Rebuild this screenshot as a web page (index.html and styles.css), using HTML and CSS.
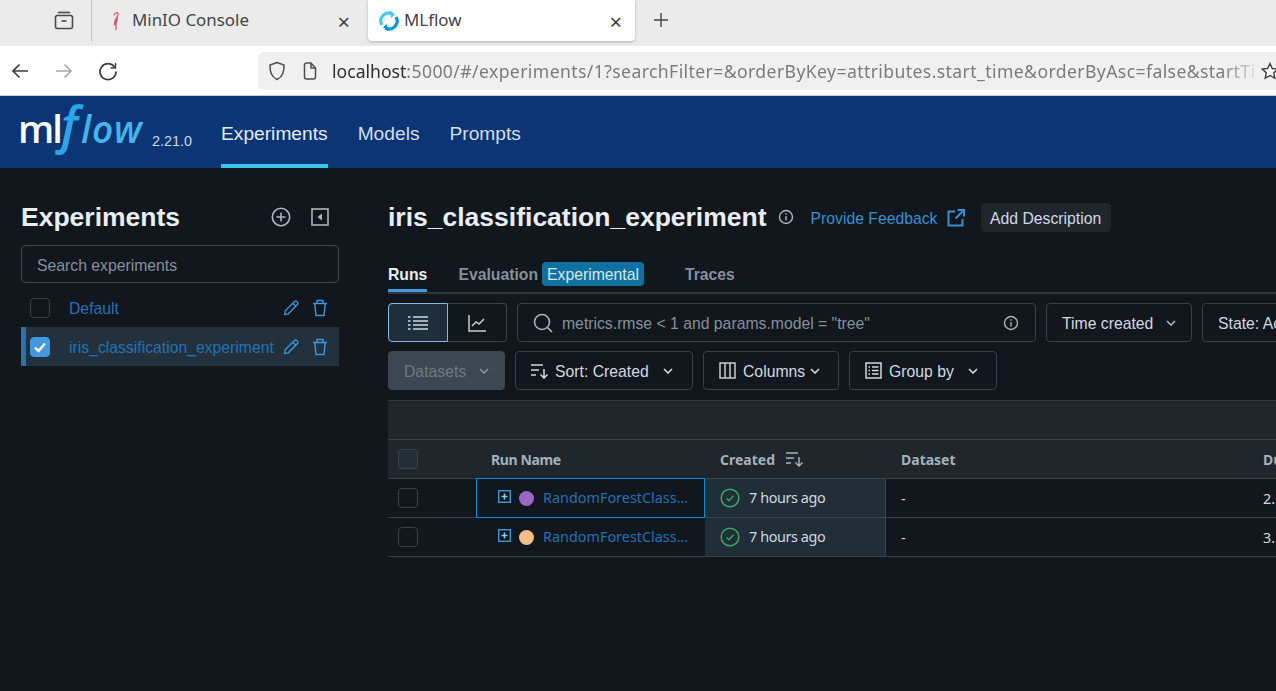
FILE: index.html
```html
<!DOCTYPE html>
<html lang="en">
<head>
  <meta charset="UTF-8">
  <title>MLflow</title>
  <link rel="stylesheet" href="styles.css">
</head>
<body>
  <div class="tabstrip">
    <svg class="tablist" width="20" height="20" viewBox="0 0 20 20" fill="none" stroke="#4a4a4a" stroke-width="1.6"><path d="M4 2.5h12"/><rect x="1.5" y="5.500" width="17" height="13" rx="2"/><path d="M7.500 11h5"/></svg>
    <div class="tab">
      <svg width="14" height="20" viewBox="0 0 14 20" fill="none" stroke="#d9556b" stroke-width="1.300"><path d="M5 4.500C5 2 8 1 9 2.500c.6 1-.2 2.500-1 4L7.500 9"/><path d="M7.800 6.500c.8 2.500.4 4.500-2.300 7 0-3 .4-5 2.300-7z" fill="#d9556b"/><path d="M7 11.500V19"/></svg>
      <span class="tab-title">MinIO Console</span>
      <span class="tab-close">×</span>
    </div>
    <div class="tab tab-active">
      <svg width="20" height="20" viewBox="0 0 20 20" fill="none" stroke-width="3.2"><path d="M3 14A8 8 0 0 1 13.500 2.800" stroke="#43c9ed"/><path d="M17 6a8 8 0 0 1-10.500 11.200" stroke="#0194e2"/><path d="M11 .5l5 3-4 3.500z" fill="#43c9ed" stroke="none"/><path d="M9 19.500l-5-3 4-3.500z" fill="#0194e2" stroke="none"/></svg>
      <span class="tab-title">MLflow</span>
      <span class="tab-close">×</span>
    </div>
    <svg class="newtab" width="16" height="16" viewBox="0 0 16 16" stroke="#444" stroke-width="1.4"><path d="M8 1v14M1 8h14"/></svg>
  </div>

  <div class="toolbar">
    <svg class="nav-btn" width="20" height="20" viewBox="0 0 20 20" fill="none" stroke="#3d3d3d" stroke-width="1.7"><path d="M18 10H3M9.500 3.500 3 10l6.500 6.500"/></svg>
    <svg class="nav-btn" width="20" height="20" viewBox="0 0 20 20" fill="none" stroke="#a8a8a8" stroke-width="1.6"><path d="M2 10h15M10.500 3.500 17 10l-6.500 6.500"/></svg>
    <svg class="nav-btn" width="20" height="20" viewBox="0 0 20 20" fill="none" stroke="#3d3d3d" stroke-width="1.7"><path d="M16.500 6A8 8 0 1 0 18 10.500"/><path d="M17.500 2v5h-5" stroke-width="1.500"/></svg>
    <div class="urlbar">
      <svg width="18" height="20" viewBox="0 0 18 20" fill="none" stroke="#4d4d4d" stroke-width="1.5"><path d="M9 1.500 2 4c0 7 1 11.500 7 14.500C15 15.500 16 11 16 4z"/></svg>
      <svg width="14" height="18" viewBox="0 0 14 18" fill="none" stroke="#4d4d4d" stroke-width="1.5"><path d="M1.500 3a2 2 0 0 1 2-2H8l4.500 5v9a2 2 0 0 1-2 2h-7a2 2 0 0 1-2-2zM8 1v5h4.500"/></svg>
      <div class="url"><span class="url-host">localhost</span>:5000/#/experiments/1?searchFilter=&amp;orderByKey=attributes.start_time&amp;orderByAsc=false&amp;startTi</div>
      <svg class="star" width="18" height="18" viewBox="0 0 18 18" fill="#fff" stroke="#3d3d3d" stroke-width="1.4"><path d="M9 1.500 11.300 6.500 16.800 7.100 12.700 10.800 13.800 16.200 9 13.500 4.200 16.200 5.300 10.800 1.200 7.100 6.700 6.500z"/></svg>
    </div>
  </div>

  <header class="appbar">
    <div class="logo"><span class="logo-ml">ml</span><span class="logo-f">f</span><span class="logo-low">low</span></div>
    <span class="version">2.21.0</span>
    <nav class="appnav">
      <a class="appnav-item appnav-active">Experiments</a>
      <a class="appnav-item">Models</a>
      <a class="appnav-item">Prompts</a>
    </nav>
  </header>

  <div class="content">
    <aside class="sidebar">
      <div class="side-head">
        <h2 class="side-title">Experiments</h2>
        <svg width="20" height="20" viewBox="0 0 20 20" fill="none" stroke="#a9b5bf" stroke-width="1.600"><circle cx="10" cy="10" r="8.700"/><path d="M10 5.500v9M5.500 10h9"/></svg>
        <svg width="18" height="18" viewBox="0 0 18 18" fill="none" stroke="#a9b5bf" stroke-width="1.600"><rect x="1" y="1" width="16" height="16"/><path d="M11 5.500v7L6.500 9z" fill="#a9b5bf" stroke="none"/></svg>
      </div>
      <div class="side-search">Search experiments</div>
      <div class="exp-row">
        <span class="check"></span>
        <a class="exp-name">Default</a>
        <svg class="exp-icon" width="16" height="16" viewBox="0 0 16 16" fill="none" stroke="#3e97dc" stroke-width="1.300"><path d="M1.500 14.500l.7-3.800L11.500 1.500a1.500 1.500 0 0 1 2.200 0l.8.8a1.500 1.500 0 0 1 0 2.200L5.300 13.800zM9.800 3.200l3 3"/></svg>
        <svg class="exp-icon" width="16" height="18" viewBox="0 0 16 18" fill="none" stroke="#3e97dc" stroke-width="1.400"><path d="M1 4.500h14M5 4.500V1.500h6v3M2.800 4.500l1.200 12h8l1.200-12"/></svg>
      </div>
      <div class="exp-row exp-row-active">
        <span class="check check-on"><svg width="14" height="14" viewBox="0 0 14 14" fill="none" stroke="#fff" stroke-width="2.400"><path d="M2 7.500 5.500 11 12 3.500"/></svg></span>
        <a class="exp-name">iris_classification_experiment</a>
        <svg class="exp-icon" width="16" height="16" viewBox="0 0 16 16" fill="none" stroke="#3e97dc" stroke-width="1.300"><path d="M1.500 14.500l.7-3.800L11.500 1.500a1.500 1.500 0 0 1 2.200 0l.8.8a1.500 1.500 0 0 1 0 2.200L5.300 13.800zM9.800 3.200l3 3"/></svg>
        <svg class="exp-icon" width="16" height="18" viewBox="0 0 16 18" fill="none" stroke="#3e97dc" stroke-width="1.400"><path d="M1 4.500h14M5 4.500V1.500h6v3M2.800 4.500l1.200 12h8l1.200-12"/></svg>
      </div>
    </aside>

    <main class="main">
      <div class="title-row">
        <h1 class="page-title">iris_classification_experiment</h1>
        <svg class="title-info" width="16" height="16" viewBox="0 0 16 16" fill="none" stroke="#a9b5bf" stroke-width="1.400"><circle cx="8" cy="8" r="6.500"/><path d="M8 7v4.500M8 4.300v1.500"/></svg>
        <a class="feedback">Provide Feedback</a>
        <svg class="feedback-icon" width="18" height="18" viewBox="0 0 18 18" fill="none" stroke="#3a8fd4" stroke-width="2"><path d="M8 2.500H1.500v14h14V10M10.500 1h6.500v6.500M17 1 8.500 9.500"/></svg>
        <button class="add-desc">Add Description</button>
      </div>

      <div class="tabs">
        <span class="tabs-item tabs-active">Runs</span>
        <span class="tabs-item tabs-eval">Evaluation<span class="badge">Experimental</span></span>
        <span class="tabs-item">Traces</span>
      </div>

      <div class="controls">
        <div class="seg">
          <span class="seg-btn seg-on"><svg width="20" height="16" viewBox="0 0 20 16" fill="none" stroke="#d1d9e1" stroke-width="1.700"><path d="M5 2h15M5 6h15M5 10h15M5 14h15M0 2h2.500M0 6h2.500M0 10h2.500M0 14h2.500"/></svg></span>
          <span class="seg-btn"><svg width="18" height="18" viewBox="0 0 18 18" fill="none" stroke="#c5ced6" stroke-width="1.500"><path d="M1 1v16h17M4 12l4-4 3 2 5-5"/></svg></span>
        </div>
        <div class="filter">
          <svg width="20" height="20" viewBox="0 0 20 20" fill="none" stroke="#a9b5bf" stroke-width="1.600"><circle cx="9" cy="9" r="7.500"/><path d="m14.500 14.500 4.500 4.500"/></svg>
          <span class="filter-text">metrics.rmse &lt; 1 and params.model = "tree"</span>
          <svg width="16" height="16" viewBox="0 0 16 16" fill="none" stroke="#a9b5bf" stroke-width="1.400"><circle cx="8" cy="8" r="6.500"/><path d="M8 7v4.500M8 4.300v1.500"/></svg>
        </div>
        <button class="btn btn-time"><span class="btn-label">Time created</span><svg class="caret" width="10" height="6" viewBox="0 0 10 6" fill="none" stroke="#a9b5bf" stroke-width="1.600"><path d="m1 1 4 4 4-4"/></svg></button>
        <button class="btn btn-state"><span class="btn-label">State: Active</span></button>
      </div>

      <div class="controls">
        <button class="btn btn-disabled"><span class="btn-label">Datasets</span><svg class="caret" width="10" height="6" viewBox="0 0 10 6" fill="none" stroke="#8a98a3" stroke-width="1.600"><path d="m1 1 4 4 4-4"/></svg></button>
        <button class="btn btn-sort"><svg width="18" height="16" viewBox="0 0 18 16" fill="none" stroke="#d1d9e1" stroke-width="1.500"><path d="M0 2h12M0 7h8M0 12h5M13 6v9M9.500 11.500 13 15l3.500-3.500"/></svg><span class="btn-label">Sort: Created</span><svg class="caret" width="10" height="6" viewBox="0 0 10 6" fill="none" stroke="#d1d9e1" stroke-width="1.600"><path d="m1 1 4 4 4-4"/></svg></button>
        <button class="btn btn-cols"><svg width="17" height="17" viewBox="0 0 17 17" fill="none" stroke="#d1d9e1" stroke-width="1.400"><rect x="1" y="1" width="15" height="15"/><path d="M6 1v15M11 1v15"/></svg><span class="btn-label">Columns</span><svg class="caret" width="10" height="6" viewBox="0 0 10 6" fill="none" stroke="#d1d9e1" stroke-width="1.600"><path d="m1 1 4 4 4-4"/></svg></button>
        <button class="btn btn-group"><svg width="17" height="17" viewBox="0 0 17 17" fill="none" stroke="#d1d9e1" stroke-width="1.500"><rect x="1" y="1" width="15" height="15"/><path d="M3.500 5H5M3.500 8.500H5M3.500 12H5M7 5h6.500M7 8.500h6.500M7 12h6.500"/></svg><span class="btn-label">Group by</span><svg class="caret" width="10" height="6" viewBox="0 0 10 6" fill="none" stroke="#d1d9e1" stroke-width="1.600"><path d="m1 1 4 4 4-4"/></svg></button>
      </div>

      <div class="runs">
        <div class="runs-band"></div>
        <div class="run-line run-head">
          <span class="cell cell-check"><span class="check check-head"></span></span>
          <span class="cell cell-name">Run Name</span>
          <span class="cell cell-created">Created<svg width="18" height="16" viewBox="0 0 18 16" fill="none" stroke="#a9b5bf" stroke-width="1.400"><path d="M0 2h12M0 7h8M0 12h5M13 6v9M9.500 11.500 13 15l3.500-3.500"/></svg></span>
          <span class="cell cell-data">Dataset</span>
          <span class="cell cell-dur">Duration</span>
        </div>
        <div class="run-line">
          <span class="cell cell-check"><span class="check"></span></span>
          <span class="cell cell-name cell-focus">
            <svg class="expand" width="13" height="13" viewBox="0 0 13 13" fill="none" stroke="#3e97dc" stroke-width="1.400"><rect x=".7" y=".7" width="11.600" height="11.600"/><path d="M6.500 3.500v6M3.500 6.500h6" stroke="#8ec5ee" stroke-width="1.600"/></svg>
            <span class="dot dot-purple"></span>
            <a class="run-link">RandomForestClass...</a>
          </span>
          <span class="cell cell-created cell-tint"><svg width="20" height="20" viewBox="0 0 20 20" fill="none" stroke="#3fa968" stroke-width="1.500"><circle cx="10" cy="10" r="8.800"/><path d="m6.500 10.500 2.500 2.300 4.500-5" stroke-width="1.300"/></svg><span class="ago">7 hours ago</span></span>
          <span class="cell cell-data">-</span>
          <span class="cell cell-dur">2.5s</span>
        </div>
        <div class="run-line">
          <span class="cell cell-check"><span class="check"></span></span>
          <span class="cell cell-name">
            <svg class="expand" width="13" height="13" viewBox="0 0 13 13" fill="none" stroke="#3e97dc" stroke-width="1.400"><rect x=".7" y=".7" width="11.600" height="11.600"/><path d="M6.500 3.500v6M3.500 6.500h6" stroke="#8ec5ee" stroke-width="1.600"/></svg>
            <span class="dot dot-orange"></span>
            <a class="run-link">RandomForestClass...</a>
          </span>
          <span class="cell cell-created cell-tint"><svg width="20" height="20" viewBox="0 0 20 20" fill="none" stroke="#3fa968" stroke-width="1.500"><circle cx="10" cy="10" r="8.800"/><path d="m6.500 10.500 2.500 2.300 4.500-5" stroke-width="1.300"/></svg><span class="ago">7 hours ago</span></span>
          <span class="cell cell-data">-</span>
          <span class="cell cell-dur">3.1s</span>
        </div>
      </div>
    </main>
  </div>
</body>
</html>
```
FILE: styles.css
```css
html, body {
  margin: 0;
  padding: 0;
  height: 100%;
}

body {
  width: 1276px;
  height: 691px;
  overflow: hidden;
  display: flex;
  flex-direction: column;
  background: #11171c;
  font-family: "Liberation Sans", Arial, sans-serif;
  font-size: 15.75px;
  color: #d1d9e1;
}

button {
  font-family: inherit;
}

a {
  text-decoration: none;
}

/* browser chrome */
.tabstrip {
  height: 46px;
  flex: none;
  display: flex;
  align-items: flex-start;
  background: #ebebeb;
  font-family: "Noto Sans", sans-serif;
  font-size: 16.9px;
  color: #454545;
}

.tablist {
  margin: 10px 18px 0 54px;
}

.tab {
  width: 241px;
  height: 41px;
  padding: 0 13px 0 17px;
  display: flex;
  align-items: center;
  gap: 9px;
  margin-right: 5px;
  box-shadow: -1px 0 0 #c4c4c4;
}

.tab-title {
  flex: 1;
  margin-top: -2px;
}

.tab-close {
  font-size: 22px;
  line-height: 1;
  color: #3d3d3d;
}

.tab-active {
  width: 243px;
  padding: 0 13px 0 11px;
  margin-right: 0;
  gap: 5px;
  background: #fff;
  border-radius: 0 0 4px 4px;
  box-shadow: 0 1px 3px rgba(0, 0, 0, .25);
}

.newtab {
  margin: 12px 0 0 18px;
}

.toolbar {
  height: 49px;
  flex: none;
  display: flex;
  align-items: center;
  background: #fff;
  border-bottom: 1px solid #c9ced6;
  padding-left: 10px;
}

.nav-btn {
  margin-right: 24px;
}

.urlbar {
  margin-left: 116px;
  flex: 1;
  min-width: 0;
  height: 38px;
  display: flex;
  align-items: center;
  gap: 17px;
  padding-left: 10px;
  background: #f0f0f0;
  border-radius: 6px 0 0 6px;
  position: relative;
  font-family: "Noto Sans", sans-serif;
}

.url {
  flex: 1;
  min-width: 0;
  margin: 0 16px 0 -2px;
  white-space: nowrap;
  font-size: 17.6px;
  letter-spacing: .4px;
  color: #7b7b7b;
  -webkit-mask-image: linear-gradient(90deg, #000 96%, transparent);
  mask-image: linear-gradient(90deg, #000 96%, transparent);
}

.url-host {
  letter-spacing: 0;
  color: #2e2e2e;
}

.star {
  position: absolute;
  right: -3px;
  top: 10px;
}

/* app header */
.appbar {
  height: 72px;
  flex: none;
  display: flex;
  align-items: stretch;
  background: #0b3574;
  padding-left: 20px;
}

.logo {
  width: 126px;
  height: 50px;
  margin-left: -2px;
  padding: 3px 0 0 0;
  display: flex;
  align-items: baseline;
  font-family: "Open Sans", sans-serif;
  line-height: 50px;
  white-space: nowrap;
}

.logo-ml {
  font-size: 38px;
  font-weight: 600;
  color: #fff;
  letter-spacing: -2px;
}

.logo-f {
  font-size: 50px;
  font-style: italic;
  font-weight: 600;
  color: #2aa5e6;
  margin-right: 3px;
}

.logo-low {
  font-size: 37px;
  font-style: italic;
  font-weight: 600;
  letter-spacing: .8px;
  color: #43b5e8;
}

.version {
  width: 69px;
  margin-left: 8px;
  padding-top: 37px;
  font-size: 14.4px;
  color: #d1d9e1;
}

.appnav {
  display: flex;
  gap: 30px;
}

.appnav-item {
  display: flex;
  align-items: center;
  height: 60px;
  padding-top: 8px;
  font-size: 19.2px;
  color: #d5dee6;
  border-bottom: 4px solid transparent;
}

.appnav-active {
  color: #e4ecf2;
  border-bottom-color: #39c4ee;
}

/* page */
.content {
  flex: 1;
  min-height: 0;
  display: flex;
  padding-left: 21px;
  background: #11171c;
}

.sidebar {
  width: 318px;
  flex: none;
  padding-top: 30px;
}

.side-head {
  height: 38px;
  display: flex;
  align-items: center;
  gap: 20px;
  padding-right: 10px;
  margin-bottom: 9px;
}

.side-title,
.page-title {
  margin: 0;
  font-size: 26.5px;
  font-weight: 700;
  color: #e8eef3;
}

.side-title {
  flex: 1;
}

.side-search {
  height: 36px;
  padding-left: 15px;
  line-height: 39px;
  border: 1px solid #3a4650;
  border-radius: 4px;
  color: #83919c;
  margin-bottom: 6px;
}

.exp-row {
  height: 38px;
  display: flex;
  align-items: center;
  padding: 0 11px 0 9px;
}

.exp-row-active {
  height: 39px;
  padding-left: 4px;
  border-left: 5px solid #2272b4;
  background: #23313d;
}

.check {
  width: 18px;
  height: 18px;
  flex: none;
  display: flex;
  align-items: center;
  justify-content: center;
  border: 1px solid #36424c;
  border-radius: 4px;
}

.check-on {
  background: #4299e0;
  border-color: #4299e0;
}

.exp-name {
  flex: 1;
  min-width: 0;
  margin: 2px 0 0 19px;
  color: #2272b4;
  white-space: nowrap;
}

.exp-icon {
  margin-left: 13px;
}

.main {
  flex: 1;
  min-width: 0;
  margin-left: 49px;
  padding-top: 30px;
  overflow: hidden;
}

.title-row {
  height: 38px;
  display: flex;
  align-items: center;
}

.title-info {
  margin-left: 11px;
}

.feedback {
  margin: 3px 0 0 17px;
  color: #3a8fd4;
  white-space: nowrap;
}

.feedback-icon {
  margin: 1px 0 0 9px;
}

.add-desc {
  margin-left: 16px;
  height: 29px;
  padding: 3px 9.5px 0;
  border: 0;
  border-radius: 4px;
  background: #1f272d;
  color: #d1d9e1;
  font-size: 15.75px;
}

.tabs {
  margin-top: 24px;
  height: 32px;
  display: flex;
  gap: 31px;
  border-bottom: 2px solid #2d3740;
  font-weight: 700;
  color: #83919c;
}

.tabs-item {
  height: 32px;
  display: flex;
  align-items: flex-start;
  padding-top: 6px;
  box-sizing: border-box;
}

.tabs-active {
  color: #e8eef3;
  border-bottom: 3px solid #4299e0;
}

.tabs-eval {
  gap: 4px;
  margin-right: 10px;
}

.badge {
  margin-top: -4px;
  padding: 0 5px;
  height: 24px;
  line-height: 25px;
  border-radius: 4px;
  background: #10719e;
  font-weight: 400;
  color: #d7e6ef;
}

.controls {
  margin-top: 9px;
  height: 39px;
  display: flex;
  gap: 10px;
}

.seg {
  width: 119px;
  display: flex;
  flex: none;
}

.seg-btn {
  flex: 1;
  display: flex;
  align-items: center;
  justify-content: center;
  border: 1px solid #36424c;
  border-left: 0;
  border-radius: 0 4px 4px 0;
}

.seg-on {
  flex: none;
  width: 58px;
  background: #1f2e3b;
  border: 1px solid #8ab8dd;
  border-radius: 4px 0 0 4px;
}

.filter {
  width: 519px;
  flex: none;
  display: flex;
  align-items: center;
  gap: 9px;
  padding: 0 16px 0 15px;
  border: 1px solid #36424c;
  border-radius: 4px;
  box-sizing: border-box;
}

.filter-text {
  flex: 1;
  margin-top: 2px;
  color: #83919c;
  white-space: nowrap;
}

.btn {
  flex: none;
  height: 39px;
  display: flex;
  align-items: center;
  gap: 7px;
  padding: 0 15px;
  background: transparent;
  border: 1px solid #36424c;
  border-radius: 4px;
  color: #d1d9e1;
  font-size: 15.75px;
  white-space: nowrap;
}

.btn-label {
  margin-top: 2px;
}

.btn-time {
  width: 146px;
  justify-content: space-between;
}

.btn-state {
  width: 150px;
}

.btn-disabled {
  width: 117px;
  background: #3b4854;
  border-color: #3b4854;
  color: #6b7a86;
  justify-content: space-between;
}

.btn-sort {
  width: 178px;
  gap: 6px;
}

.btn-sort .caret {
  margin-left: 8px;
}

.btn-cols {
  width: 136px;
}

.btn-cols .caret {
  margin-left: -2px;
}

.btn-group {
  width: 148px;
}

.btn-group .caret {
  margin-left: 7px;
}

/* runs table */
.runs {
  margin-top: 10px;
  font-family: "Noto Sans", sans-serif;
  font-size: 14.4px;
}

.runs-band {
  height: 38px;
  background: #1f272d;
  border-top: 1px solid #2d3740;
  border-bottom: 1px solid #38434d;
}

.run-line {
  height: 38px;
  display: grid;
  grid-template-columns: 88px 229px 181px 377px 200px;
  border-bottom: 1px solid #36424c;
}

.run-head {
  background: #1f272d;
  font-size: 14px;
  font-weight: 700;
  color: #a3b1bc;
}

.cell {
  display: flex;
  align-items: center;
  white-space: nowrap;
  overflow: hidden;
  min-width: 0;
}

.cell-check {
  padding-left: 10px;
}

.check-head {
  background: #252e35;
}

.run-head .cell-name {
  padding-left: 15px;
  letter-spacing: -.4px;
}

.cell-name {
  padding-left: 22px;
}

.cell-focus {
  padding-left: 21px;
  border: 1px solid #0e8ad6;
  margin: -1px 0;
  height: 38px;
}

.expand {
  margin-bottom: 4px;
}

.dot {
  width: 15px;
  height: 15px;
  margin-left: 8px;
  border-radius: 50%;
  flex: none;
}

.dot-purple {
  background: #9a67c5;
}

.dot-orange {
  background: #f4bf85;
}

.run-link {
  margin: -2px 0 0 9px;
  color: #2272b4;
}

.cell-created {
  padding-left: 15px;
  gap: 9px;
}

.run-head .cell-created {
  gap: 11px;
}

.cell-tint {
  background: #1f2e37;
  border-right: 1px solid #36424c;
}

.ago {
  margin-top: -2px;
  letter-spacing: -.4px;
  color: #d1d9e1;
}

.cell-data {
  padding-left: 15px;
}
```
